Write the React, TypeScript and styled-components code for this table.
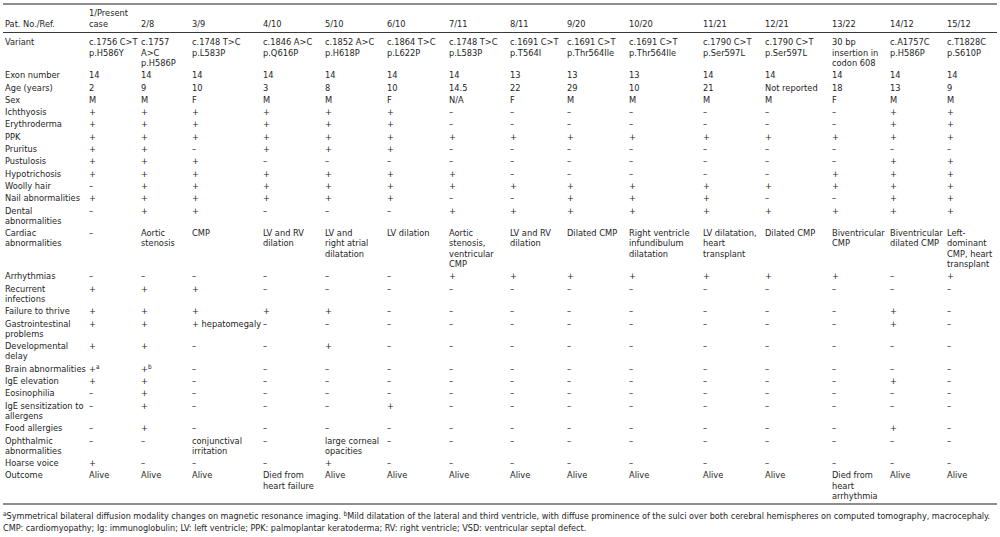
import React from "react";
import styled, { createGlobalStyle } from "styled-components";

const Global = createGlobalStyle`
  html, body { margin: 0; padding: 0; background: #ffffff; }
  body { font-family: "DejaVu Sans Condensed", "DejaVu Sans", Verdana, sans-serif; font-stretch: condensed; }
`;

const Page = styled.div`
  width: 1000px;
  height: 537px;
  box-sizing: border-box;
  padding: 3px 3px 0 3px;
  color: #1e1e1e;
  font-size: 9.2px;
  overflow: hidden;
`;

const Table = styled.table`
  width: 994px;
  table-layout: fixed;
  border-collapse: collapse;
  border-top: 2px solid #8e8e8e;
  border-bottom: 2px solid #8e8e8e;
`;

const Col = styled.col<{ $w: number }>`
  width: ${(p) => p.$w}px;
`;

const HeadRow = styled.tr`
  height: 28px;
  border-bottom: 1px solid #3a3a3a;
`;

const Th = styled.th`
  text-align: left;
  font-weight: normal;
  vertical-align: bottom;
  padding: 3px 2px 3px 2px;
  line-height: 10.7px;
  white-space: nowrap;
`;

const Td = styled.td<{ $first?: boolean; $last?: boolean }>`
  vertical-align: top;
  text-align: left;
  padding: ${(p) => (p.$first ? "4px" : "1px")} 2px ${(p) => (p.$last ? "2px" : "1px")} 2px;
  line-height: 10.3px;
  white-space: nowrap;
  overflow: visible;
`;

const Line = styled.span`
  display: block;
`;

const Sup = styled.sup`
  font-size: 6.5px;
  line-height: 0;
  vertical-align: 3px;
`;

const Notes = styled.div`
  padding-top: 5px;
  font-size: 9px;
  line-height: 12px;
  white-space: nowrap;
`;

const widths = [84, 52, 51, 71, 62, 62, 62, 61, 57, 62, 74, 62, 67, 58, 57, 52];

const heads: string[][] = [
  ["Pat. No./Ref."],
  ["1/Present", "case"],
  ["2/8"],
  ["3/9"],
  ["4/10"],
  ["5/10"],
  ["6/10"],
  ["7/11"],
  ["8/11"],
  ["9/20"],
  ["10/20"],
  ["11/21"],
  ["12/21"],
  ["13/22"],
  ["14/12"],
  ["15/12"],
];

type Cell = string | string[];

const P = "+";
const M = "–";

const rows: { label: string[]; cells: Cell[] }[] = [
  {
    label: ["Variant"],
    cells: [
      ["c.1756 C>T", "p.H586Y"],
      ["c.1757", "A>C", "p.H586P"],
      ["c.1748 T>C", "p.L583P"],
      ["c.1846 A>C", "p.Q616P"],
      ["c.1852 A>C", "p.H618P"],
      ["c.1864 T>C", "p.L622P"],
      ["c.1748 T>C", "p.L583P"],
      ["c.1691 C>T", "p.T564I"],
      ["c.1691 C>T", "p.Thr564Ile"],
      ["c.1691 C>T", "p.Thr564Ile"],
      ["c.1790 C>T", "p.Ser597L"],
      ["c.1790 C>T", "p.Ser597L"],
      ["30 bp", "insertion in", "codon 608"],
      ["c.A1757C", "p.H586P"],
      ["c.T1828C", "p.S610P"],
    ],
  },
  { label: ["Exon number"], cells: ["14", "14", "14", "14", "14", "14", "14", "13", "13", "13", "14", "14", "14", "14", "14"] },
  { label: ["Age (years)"], cells: ["2", "9", "10", "3", "8", "10", "14.5", "22", "29", "10", "21", "Not reported", "18", "13", "9"] },
  { label: ["Sex"], cells: ["M", "M", "F", "M", "M", "F", "N/A", "F", "M", "M", "M", "M", "F", "M", "M"] },
  { label: ["Ichthyosis"], cells: [P, P, P, P, P, P, M, M, M, M, M, M, M, P, P] },
  { label: ["Erythroderma"], cells: [P, P, P, P, P, P, M, M, M, M, M, M, M, P, P] },
  { label: ["PPK"], cells: [P, P, P, P, P, P, P, P, P, P, P, P, P, P, P] },
  { label: ["Pruritus"], cells: [P, P, M, P, P, P, M, M, M, M, M, M, M, M, M] },
  { label: ["Pustulosis"], cells: [P, P, P, M, M, M, M, M, M, M, M, M, M, P, P] },
  { label: ["Hypotrichosis"], cells: [P, P, P, P, P, P, P, M, M, M, M, M, P, P, P] },
  { label: ["Woolly hair"], cells: [M, P, P, P, P, P, P, P, P, P, P, P, P, P, P] },
  { label: ["Nail abnormalities"], cells: [P, P, P, P, P, P, M, M, P, P, P, M, M, P, P] },
  { label: ["Dental", "abnormalities"], cells: [M, P, P, M, M, M, P, P, P, P, P, P, P, P, P] },
  {
    label: ["Cardiac", "abnormalities"],
    cells: [
      M,
      ["Aortic", "stenosis"],
      ["CMP"],
      ["LV and RV", "dilation"],
      ["LV and", "right atrial", "dilatation"],
      ["LV dilation"],
      ["Aortic", "stenosis,", "ventricular", "CMP"],
      ["LV and RV", "dilation"],
      ["Dilated CMP"],
      ["Right ventricle", "infundibulum", "dilatation"],
      ["LV dilatation,", "heart", "transplant"],
      ["Dilated CMP"],
      ["Biventricular", "CMP"],
      ["Biventricular", "dilated CMP"],
      ["Left-", "dominant", "CMP, heart", "transplant"],
    ],
  },
  { label: ["Arrhythmias"], cells: [M, M, M, M, M, M, P, P, P, P, P, P, P, M, P] },
  { label: ["Recurrent", "infections"], cells: [P, P, P, M, M, M, M, M, M, M, M, M, M, M, M] },
  { label: ["Failure to thrive"], cells: [P, P, P, P, P, M, M, M, M, M, M, M, M, P, M] },
  { label: ["Gastrointestinal", "problems"], cells: [P, P, "+ hepatomegaly", M, M, M, M, M, M, M, M, M, M, P, M] },
  { label: ["Developmental", "delay"], cells: [P, P, M, M, P, M, M, M, M, M, M, M, M, M, M] },
  { label: ["Brain abnormalities"], cells: ["+a", "+b", M, M, M, M, M, M, M, M, M, M, M, M, M] },
  { label: ["IgE elevation"], cells: [P, P, M, M, M, M, M, M, M, M, M, M, M, P, M] },
  { label: ["Eosinophilia"], cells: [M, P, M, M, M, M, M, M, M, M, M, M, M, M, M] },
  { label: ["IgE sensitization to", "allergens"], cells: [M, P, M, M, M, P, M, M, M, M, M, M, M, M, M] },
  { label: ["Food allergies"], cells: [M, P, M, M, M, M, M, M, M, M, M, M, M, P, M] },
  {
    label: ["Ophthalmic", "abnormalities"],
    cells: [M, M, ["conjunctival", "irritation"], M, ["large corneal", "opacities"], M, M, M, M, M, M, M, M, M, M],
  },
  { label: ["Hoarse voice"], cells: [P, M, M, M, P, M, M, M, M, M, M, M, M, M, M] },
  {
    label: ["Outcome"],
    cells: [
      "Alive",
      "Alive",
      "Alive",
      ["Died from", "heart failure"],
      "Alive",
      "Alive",
      "Alive",
      "Alive",
      "Alive",
      "Alive",
      "Alive",
      "Alive",
      ["Died from", "heart", "arrhythmia"],
      "Alive",
      "Alive",
    ],
  },
];

function renderText(t: string) {
  if (t === "+a" || t === "+b") {
    return (
      <>
        +<Sup>{t[1]}</Sup>
      </>
    );
  }
  return t;
}

function CellContent({ value }: { value: Cell }) {
  const lines = Array.isArray(value) ? value : [value];
  return (
    <>
      {lines.map((l, i) => (
        <Line key={i}>{renderText(l)}</Line>
      ))}
    </>
  );
}

export default function App() {
  return (
    <>
      <Global />
      <Page>
        <Table>
          <colgroup>
            {widths.map((w, i) => (
              <Col key={i} $w={w} />
            ))}
          </colgroup>
          <thead>
            <HeadRow>
              {heads.map((h, i) => (
                <Th key={i}>
                  {h.map((l, j) => (
                    <Line key={j}>{l}</Line>
                  ))}
                </Th>
              ))}
            </HeadRow>
          </thead>
          <tbody>
            {rows.map((r, ri) => (
              <tr key={ri}>
                <Td $first={ri === 0} $last={ri === rows.length - 1}>
                  <CellContent value={r.label} />
                </Td>
                {r.cells.map((c, ci) => (
                  <Td key={ci} $first={ri === 0} $last={ri === rows.length - 1}>
                    <CellContent value={c} />
                  </Td>
                ))}
              </tr>
            ))}
          </tbody>
        </Table>
        <Notes>
          <Line>
            <Sup>a</Sup>Symmetrical bilateral diffusion modality changes on magnetic resonance imaging. <Sup>b</Sup>Mild
            dilatation of the lateral and third ventricle, with diffuse prominence of the sulci over both cerebral hemispheres
            on computed tomography, macrocephaly.
          </Line>
          <Line>
            CMP: cardiomyopathy; Ig: immunoglobulin; LV: left ventricle; PPK: palmoplantar keratoderma; RV: right ventricle;
            VSD: ventricular septal defect.
          </Line>
        </Notes>
      </Page>
    </>
  );
}
